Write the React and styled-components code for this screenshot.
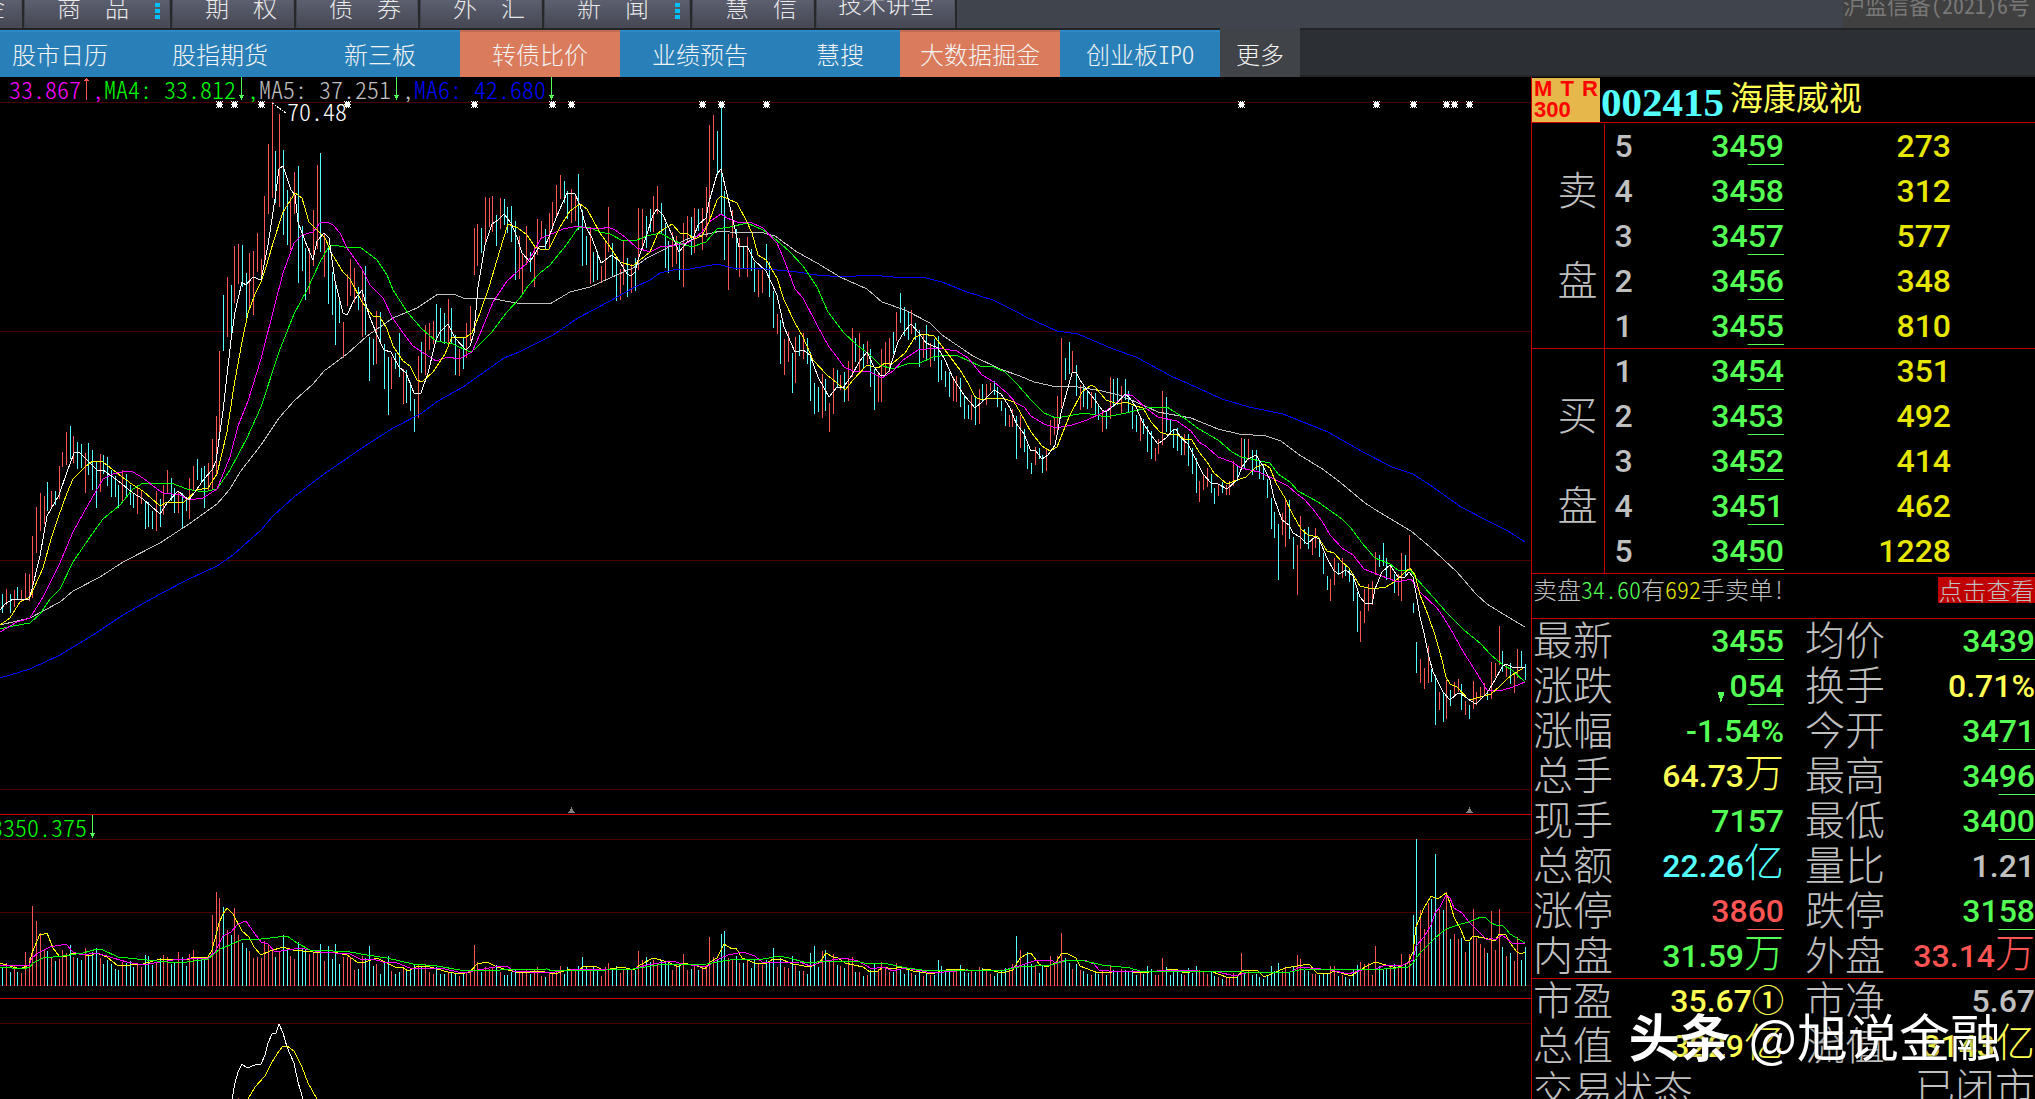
import React from "react";
import styled, { createGlobalStyle, css } from "styled-components";

// x, high, low, volume for each day, a negative volume marks a falling day
const days = [
  2,517,536,-19, 6,512,528,23, 10,517,536,-14, 14,513,530,21, 17,510,523,-14, 21,513,525,13, 25,496,523,34, 29,497,524,28,
  32,459,521,80, 36,430,476,65, 40,416,454,53, 44,419,447,36, 47,405,434,-35, 51,414,431,29, 55,414,428,-25, 59,389,422,27,
  62,375,390,36, 66,355,388,33, 70,349,382,-41, 73,359,386,29, 77,365,392,-28, 81,367,391,-26, 85,376,416,38, 88,366,398,-31,
  92,373,413,-34, 96,385,431,-38, 100,377,415,28, 103,378,397,-22, 107,380,409,-26, 111,393,420,-22, 115,399,420,-17, 118,408,431,-16,
  122,393,425,24, 126,397,419,-23, 130,408,428,-25, 133,417,431,-19, 137,408,437,21, 141,413,427,19, 145,424,452,-31, 148,425,450,-30,
  152,434,452,-21, 156,414,454,24, 160,422,450,-28, 163,408,438,31, 167,393,416,29, 171,401,424,-22, 174,411,436,-24, 178,415,436,34,
  182,416,451,-29, 186,420,434,-20, 189,401,442,32, 193,389,413,36, 197,382,403,-29, 201,391,406,-26, 204,389,431,-28, 208,386,414,27,
  212,362,412,71, 216,339,397,94, 219,274,357,88, 223,218,274,-79, 227,200,260,56, 231,208,260,-51, 234,169,226,78, 238,167,207,51,
  242,168,210,-43, 246,196,243,-38, 249,176,230,35, 253,174,238,28, 257,156,195,29, 261,182,204,28, 264,119,187,45, 268,67,137,42,
  272,25,121,37, 275,74,126,-29, 279,37,130,35, 283,73,158,-51, 287,113,168,-38, 290,120,173,30, 294,95,137,27, 298,89,206,-44,
  302,149,194,-38, 305,171,223,-36, 309,171,217,32, 313,133,189,34, 317,88,172,34, 320,76,175,-42, 324,156,200,25, 328,169,227,-40,
  332,195,238,-27, 335,207,268,-42, 339,220,246,-22, 343,245,281,29, 347,197,229,29, 350,182,219,28, 354,191,226,16, 358,210,233,-17,
  362,194,260,30, 365,189,258,-28, 369,260,304,-40, 373,262,288,-20, 376,234,287,22, 380,235,267,-12, 384,267,312,-25, 388,280,338,-30,
  391,280,312,15, 395,276,292,-12, 399,256,300,-14, 403,292,327,19, 406,293,326,-16, 410,305,334,-16, 414,322,355,-21, 418,279,341,21,
  421,265,296,-19, 425,248,298,22, 429,246,273,14, 433,244,267,12, 436,227,265,-19, 440,231,264,-12, 444,236,267,-12, 448,222,269,14,
  451,231,267,-13, 455,258,298,-12, 459,272,299,10, 463,261,292,-14, 466,246,281,13, 470,229,264,16, 474,151,198,41, 477,147,189,24,
  481,151,176,-14, 485,120,167,19, 489,121,150,17, 492,119,155,19, 496,138,169,-21, 500,121,152,14, 504,122,148,-11, 507,130,156,-11,
  511,129,165,-14, 515,144,203,-17, 519,159,202,14, 522,176,216,13, 526,149,188,16, 530,175,195,-12, 534,170,210,16, 537,142,178,19,
  541,144,162,10, 545,152,172,-9, 549,136,170,14, 552,125,153,14, 556,108,141,16, 560,98,122,20, 564,104,126,-12, 567,114,142,-19,
  571,112,146,16, 575,117,144,15, 578,97,153,-20, 582,133,189,-29, 586,159,188,-19, 590,150,207,16, 593,175,205,-19, 597,174,203,-16,
  601,189,206,10, 605,163,202,19, 608,130,175,23, 612,166,200,-18, 616,180,224,-20, 620,192,223,13, 623,163,208,17, 627,181,220,-17,
  631,187,216,17, 635,181,214,-16, 638,131,193,35, 642,132,170,26, 646,139,171,-29, 650,132,155,-24, 653,119,155,26, 657,109,137,22,
  661,126,157,-25, 665,146,191,-23, 668,164,196,-24, 672,155,190,16, 676,159,187,21, 679,166,203,-21, 683,146,210,32, 687,139,166,16,
  691,140,178,-17, 694,131,176,21, 698,132,154,-16, 702,131,173,19, 706,110,160,21, 709,48,143,49, 713,38,83,29, 717,54,98,-26,
  721,30,137,-52, 724,114,183,-55, 728,157,213,28, 732,133,161,26, 736,152,193,-30, 739,161,200,23, 743,170,191,-23, 747,160,200,25,
  751,172,194,-18, 754,185,215,-26, 758,193,220,22, 762,193,216,21, 766,167,193,-26, 769,185,220,-24, 773,214,251,-38, 777,237,257,19,
  780,243,287,-28, 784,262,298,19, 788,255,285,18, 792,276,316,-30, 795,260,306,20, 799,258,279,-15, 803,256,282,15, 807,261,287,-12,
  810,275,324,-33, 814,306,337,-40, 818,310,335,-19, 822,297,341,35, 825,302,334,-36, 829,326,355,24, 833,291,337,32, 837,293,311,-21,
  840,298,313,20, 844,295,325,-18, 848,284,324,28, 852,251,300,29, 855,261,285,-14, 859,256,295,14, 863,267,292,-10, 867,264,287,11,
  870,272,310,-16, 874,292,333,-23, 878,296,325,17, 881,272,325,24, 885,265,298,18, 889,261,295,14, 893,255,277,-14, 896,235,264,23,
  900,216,246,-17, 904,230,259,-12, 908,234,263,-17, 911,233,257,13, 915,246,263,-11, 919,253,290,-14, 923,258,281,10, 926,248,282,-12,
  930,266,290,11, 934,262,284,-11, 938,259,305,-26, 941,283,303,-20, 945,294,310,-14, 949,295,320,-16, 953,300,324,15, 956,299,325,15,
  960,301,330,-21, 964,319,342,-14, 968,328,342,-13, 971,318,343,16, 975,319,348,-14, 979,312,347,19, 982,307,325,-18, 986,307,328,15,
  990,306,314,12, 994,304,318,-10, 997,310,330,-13, 1001,324,334,-15, 1005,331,349,-18, 1009,338,350,17, 1012,332,350,22, 1016,339,382,-50,
  1020,338,371,36, 1024,352,375,-22, 1027,368,392,-34, 1031,386,397,-22, 1035,370,388,20, 1039,371,382,-13, 1042,378,396,-21, 1046,372,394,18,
  1050,343,368,30, 1054,341,358,24, 1057,319,353,30, 1061,261,331,53, 1065,281,303,-28, 1069,265,297,-23, 1072,274,296,17, 1076,288,319,-22,
  1080,308,333,16, 1083,308,330,-15, 1087,313,332,-12, 1091,315,331,11, 1095,316,338,-15, 1098,328,343,-12, 1102,333,355,15, 1106,335,352,-11,
  1110,300,342,21, 1113,302,330,-16, 1117,301,328,-15, 1121,309,337,17, 1125,302,323,-16, 1128,314,336,-14, 1132,329,352,-16, 1136,338,355,-11,
  1140,340,364,14, 1143,342,357,-12, 1147,349,375,-20, 1151,354,382,-17, 1155,371,384,11, 1158,362,377,11, 1162,314,368,28, 1166,320,355,-19,
  1170,343,358,-11, 1173,352,371,-15, 1177,351,374,-15, 1181,359,378,-12, 1184,357,378,11, 1188,357,389,-18, 1192,371,397,-13, 1196,381,416,-20,
  1199,404,425,16, 1203,397,413,15, 1207,391,410,12, 1211,397,416,-15, 1214,411,427,-10, 1218,407,419,9, 1222,405,416,-7, 1226,408,418,8,
  1229,404,418,8, 1233,384,409,13, 1237,388,404,-9, 1241,361,393,33, 1244,362,392,-13, 1248,362,383,15, 1252,373,398,-11, 1256,373,393,-12,
  1259,384,402,-9, 1263,388,403,-7, 1267,402,421,-11, 1271,421,452,-20, 1274,435,461,-15, 1278,447,503,-23, 1282,436,458,15, 1285,421,470,19,
  1289,423,462,-13, 1293,460,492,-19, 1297,468,518,31, 1300,439,472,27, 1304,452,467,-16, 1308,450,472,-15, 1312,463,478,12, 1315,451,471,12,
  1319,461,480,-11, 1323,476,497,-13, 1327,499,513,-13, 1330,502,524,20, 1334,481,508,20, 1338,486,498,-10, 1342,481,501,11, 1345,488,499,-9,
  1349,491,505,-7, 1353,497,524,-17, 1357,515,555,-21, 1360,534,565,24, 1364,512,546,22, 1368,507,534,23, 1372,504,528,11, 1375,475,498,40,
  1379,478,490,-20, 1383,466,489,-17, 1386,481,503,-18, 1390,487,502,19, 1394,497,516,-22, 1398,497,519,21, 1401,476,524,32, 1405,478,500,-22,
  1409,458,493,32, 1413,526,536,-71, 1416,565,596,-147, 1420,582,606,76, 1424,591,612,57, 1428,569,606,83, 1431,592,605,-87, 1435,598,648,-132,
  1439,615,633,77, 1443,616,645,-76, 1446,603,642,94, 1450,613,629,-47, 1454,605,618,52, 1458,602,615,47, 1461,607,633,-48, 1465,624,638,34,
  1469,628,642,-44, 1473,604,632,77, 1476,615,628,48, 1480,610,623,42, 1484,606,618,38, 1487,613,623,-33, 1491,585,622,75, 1495,586,600,36,
  1499,549,588,77, 1502,574,595,-39, 1506,588,600,30, 1510,586,607,-33, 1514,595,616,25, 1517,572,601,49, 1521,574,590,-26, 1525,587,603,-39,
];

const priceLines = [
  {
    color: "#0000ff",
    points:
      "0,601 30,592 60,578 93,558 123,538 160,517 189,502 217,489 233,478 261,453 273,439 294,420 324,397 362,371 393,351 422,336 438,324 463,310 480,298 504,281 519,275 533,268 553,258 578,241 610,224 633,211 650,203 660,196 673,193 690,192 717,187 733,191 767,192 797,195 817,198 843,200 870,198 893,200 922,200 942,205 967,215 993,223 1019,236 1026,240 1057,254 1078,257 1113,272 1136,280 1171,299 1198,311 1222,322 1249,330 1283,337 1328,355 1363,375 1392,390 1413,397 1430,408 1461,430 1488,444 1508,454 1525,465",
  },
  {
    color: "#c0c0c0",
    points:
      "0,548 30,541 60,525 73,514 100,500 123,485 160,466 189,447 217,427 230,412 240,395 261,368 279,341 294,324 313,307 324,294 347,277 367,259 393,241 417,231 438,217 453,217 466,222 490,221 505,224 517,226 550,227 570,215 590,210 610,201 633,191 647,181 667,171 692,160 703,158 721,154 730,155 760,155 775,159 797,175 817,186 840,200 867,212 882,225 905,233 930,246 942,258 973,279 1000,292 1020,299 1034,305 1057,310 1072,309 1102,314 1119,318 1136,325 1158,335 1191,341 1218,352 1239,357 1266,359 1281,364 1298,377 1324,393 1341,406 1365,426 1379,435 1411,454 1430,470 1457,495 1476,517 1487,527 1508,540 1525,550",
  },
  {
    color: "#00ff00",
    points:
      "0,552 13,549 30,546 40,537 50,522 60,512 73,485 90,460 103,442 120,428 133,412 143,406 171,406 187,412 203,415 217,412 230,393 247,361 261,330 279,275 294,237 307,213 320,185 328,171 333,168 350,171 360,170 377,183 387,198 393,213 408,236 422,252 436,264 453,267 470,275 475,272 492,255 507,235 520,221 528,209 540,196 550,188 567,167 578,151 588,150 600,155 610,157 623,164 637,163 647,159 660,156 673,163 682,167 692,170 706,165 717,152 730,150 747,146 763,153 773,160 790,175 803,189 817,210 828,235 843,255 857,268 870,278 880,288 893,292 907,287 920,286 933,280 947,278 958,279 980,289 994,290 1005,295 1017,307 1031,323 1044,336 1056,341 1085,336 1106,340 1126,336 1147,331 1167,330 1184,341 1199,352 1218,363 1232,375 1241,380 1270,386 1278,397 1290,405 1298,414 1318,425 1342,442 1351,451 1362,466 1375,481 1390,487 1398,493 1411,494 1416,501 1433,520 1447,536 1464,553 1481,567 1491,578 1503,588 1512,593 1525,605",
  },
  {
    color: "#ff00ff",
    points:
      "0,555 17,545 30,541 43,520 59,488 73,455 88,428 103,402 113,397 126,394 133,395 143,401 157,412 163,416 180,418 189,423 203,421 217,412 230,380 238,349 248,324 261,282 273,235 283,196 294,166 302,158 313,155 320,146 327,145 333,148 340,156 347,171 362,192 370,208 383,221 392,240 403,256 413,269 422,275 436,284 448,280 459,282 472,275 480,257 493,225 507,204 517,195 527,186 533,176 541,161 549,158 563,152 578,149 586,151 601,152 608,150 615,153 625,160 637,171 650,175 660,170 677,168 687,166 694,162 702,155 709,145 721,137 727,141 737,145 750,145 763,151 777,166 785,185 795,212 803,221 817,248 829,270 837,280 844,290 853,294 870,295 882,301 893,294 903,283 918,273 937,271 957,274 968,281 982,298 994,305 1007,316 1016,326 1024,330 1031,339 1044,347 1056,351 1072,348 1087,343 1102,336 1113,329 1126,317 1133,319 1147,332 1158,340 1177,344 1191,354 1199,365 1207,370 1218,380 1232,385 1241,391 1259,395 1280,405 1288,409 1297,417 1304,422 1312,431 1322,444 1330,458 1342,471 1353,478 1364,492 1379,498 1398,505 1411,502 1420,515 1437,531 1444,541 1454,558 1464,576 1473,590 1481,603 1487,613 1503,613 1513,610 1525,605",
  },
  {
    color: "#ffff00",
    points:
      "0,548 10,541 20,525 30,520 43,491 51,462 58,441 67,416 73,402 85,390 93,384 103,385 117,396 133,408 143,414 160,429 167,425 183,426 197,413 208,411 217,397 227,355 234,309 242,265 248,236 255,217 261,205 267,187 273,166 283,135 295,116 302,121 309,145 317,153 325,161 332,177 343,195 350,202 362,225 373,239 380,240 387,252 393,269 403,284 410,289 417,303 422,305 433,295 445,277 452,260 466,260 472,256 480,236 489,210 500,173 508,147 518,151 527,158 535,170 542,173 549,172 560,150 570,134 580,127 587,132 600,156 610,170 620,185 633,189 640,183 650,175 658,156 672,147 680,156 687,156 694,162 702,159 709,145 717,123 721,119 728,122 737,126 747,145 752,156 758,178 766,183 777,201 784,223 795,246 803,260 813,283 827,298 837,306 845,313 853,303 867,288 878,291 885,286 893,286 905,276 915,260 923,257 934,259 945,273 960,293 968,306 975,320 982,323 990,321 1005,322 1014,325 1020,335 1031,355 1042,369 1050,374 1057,370 1069,340 1082,315 1091,308 1095,310 1106,323 1118,327 1126,325 1136,329 1143,331 1151,345 1160,355 1166,357 1176,357 1184,362 1192,363 1199,375 1207,385 1214,396 1227,407 1237,403 1246,400 1256,390 1264,387 1270,391 1276,406 1285,421 1293,438 1301,452 1308,458 1318,460 1327,474 1334,476 1342,485 1349,491 1355,501 1360,509 1372,512 1386,510 1394,505 1403,497 1410,491 1415,498 1420,518 1428,538 1435,558 1442,583 1446,600 1450,607 1457,610 1469,623 1484,619 1491,617 1499,610 1507,602 1515,596 1525,590",
  },
  {
    color: "#ffffff",
    points:
      "0,533 5,527 13,522 29,522 32,512 40,479 47,439 59,418 67,395 74,376 79,375 88,384 97,393 103,393 117,403 133,416 143,422 160,437 167,426 178,414 189,423 197,412 204,402 212,393 216,384 223,334 231,263 235,235 242,205 246,208 253,200 261,203 268,168 275,122 279,92 283,89 291,113 295,118 298,145 305,164 313,183 317,164 324,156 329,161 335,204 343,236 347,238 354,223 362,213 369,238 377,258 384,273 391,275 399,290 406,296 414,316 421,316 428,296 436,263 440,255 448,247 455,261 466,273 470,269 474,256 478,210 485,168 492,147 498,143 504,137 511,146 517,160 522,176 530,185 539,170 545,169 549,160 556,141 563,125 567,116 575,117 580,128 586,150 592,161 601,186 612,178 620,185 627,197 631,199 635,195 638,183 646,160 653,138 657,132 663,138 672,158 679,175 687,165 693,162 698,148 706,141 709,125 717,97 721,92 728,121 739,170 747,169 754,183 766,194 777,218 784,250 795,275 803,273 810,278 818,300 829,320 837,310 843,311 852,298 859,285 867,275 874,290 880,298 885,298 889,294 893,281 898,265 904,255 911,247 919,256 926,266 938,271 945,283 953,301 964,318 975,331 982,325 994,313 1001,317 1010,331 1016,346 1024,357 1031,374 1035,373 1042,382 1048,378 1055,368 1058,353 1061,336 1066,318 1072,296 1076,295 1080,303 1087,313 1095,323 1102,333 1106,335 1117,326 1125,317 1129,320 1136,330 1143,346 1151,358 1158,367 1166,361 1173,353 1176,352 1181,361 1188,367 1196,383 1203,397 1211,406 1218,407 1227,412 1237,403 1242,390 1248,382 1256,378 1263,389 1270,403 1274,421 1282,443 1289,448 1293,456 1300,460 1307,467 1315,460 1319,462 1327,481 1334,494 1339,497 1346,493 1353,499 1360,520 1365,526 1372,527 1375,512 1382,495 1390,488 1398,500 1405,500 1409,495 1413,500 1416,516 1420,540 1424,556 1428,576 1433,595 1443,615 1450,623 1458,616 1461,617 1471,624 1476,627 1487,616 1495,603 1502,590 1506,587 1514,591 1525,590",
  },
];

const volumeLines = [
  {
    color: "#ffff00",
    points:
      "0,148 20,154 29,150 32,138 40,119 44,119 47,118 53,133 59,141 67,141 73,138 83,139 89,141 97,138 107,142 118,151 143,149 160,144 173,144 187,145 193,142 208,142 212,135 216,120 219,108 223,99 227,93 233,99 242,116 249,122 254,132 261,140 270,136 283,132 293,135 313,137 333,137 347,140 357,147 365,147 377,143 395,152 402,152 408,156 418,151 430,152 448,157 460,159 470,157 477,149 487,147 497,152 508,155 520,158 540,156 555,159 570,154 577,156 583,152 595,151 603,155 623,152 633,155 640,150 653,143 668,147 678,152 683,148 697,151 705,154 710,147 717,143 724,129 732,134 736,133 742,143 755,148 767,148 773,144 783,145 793,149 810,152 820,147 826,138 833,142 837,142 845,148 863,152 870,157 878,156 883,152 893,154 900,152 913,156 933,159 940,156 953,154 977,156 987,154 1002,158 1013,155 1020,143 1029,138 1031,138 1039,149 1046,152 1056,148 1061,139 1066,138 1076,143 1080,151 1098,158 1126,156 1140,158 1176,154 1184,158 1196,156 1210,156 1229,163 1237,162 1242,156 1257,155 1264,162 1285,153 1297,151 1309,149 1317,158 1328,159 1334,156 1351,161 1365,152 1375,147 1386,150 1396,153 1408,148 1413,137 1416,112 1424,93 1431,81 1438,84 1446,78 1450,88 1454,102 1461,115 1465,125 1469,126 1473,121 1484,123 1495,126 1499,119 1506,120 1510,128 1517,137 1521,139 1525,137",
  },
  {
    color: "#ff00ff",
    points:
      "0,151 29,150 32,143 38,138 50,132 66,129 73,137 82,140 97,138 113,143 127,147 143,150 160,147 180,144 187,144 208,143 215,137 223,121 231,117 238,109 246,106 255,119 261,127 268,129 275,137 300,133 320,137 350,139 360,144 373,144 383,147 397,148 410,153 440,153 463,158 473,156 500,151 507,151 513,156 530,157 555,157 560,156 580,154 633,154 647,150 672,146 683,149 707,152 713,147 721,143 728,140 743,137 755,141 763,148 800,147 810,151 825,146 845,143 858,146 872,154 883,152 893,156 905,153 933,158 967,155 1000,156 1019,151 1034,146 1051,145 1056,148 1065,145 1084,145 1094,149 1099,155 1119,157 1157,156 1177,155 1218,157 1235,161 1246,158 1290,157 1300,152 1331,155 1348,159 1362,155 1375,154 1386,150 1403,150 1413,145 1416,131 1424,122 1431,110 1435,98 1440,92 1446,80 1450,83 1454,93 1462,98 1469,107 1481,119 1487,125 1491,123 1495,125 1502,120 1512,128 1522,129 1525,128",
  },
  {
    color: "#00ff00",
    points:
      "0,152 23,154 30,152 33,148 43,143 63,141 83,138 97,134 103,135 118,142 147,145 167,147 187,147 208,144 220,134 230,130 243,124 261,124 287,121 297,128 310,135 333,136 350,137 367,140 387,143 413,149 437,151 460,155 500,155 547,154 552,156 607,155 633,154 657,150 707,149 723,146 737,144 763,144 780,141 793,144 807,148 828,146 860,147 868,149 883,148 907,153 930,156 967,155 1000,156 1019,152 1051,150 1068,145 1085,146 1102,150 1130,153 1140,156 1218,156 1270,158 1290,157 1304,154 1372,155 1408,152 1413,148 1420,138 1435,123 1446,114 1461,109 1469,107 1481,102 1486,103 1491,108 1496,110 1502,110 1506,114 1510,119 1525,128",
  },
];

const indicatorLines = [
  {
    color: "#ffffff",
    points:
      "232,100 235,84 238,73 242,65 246,68 250,68 257,65 261,65 265,56 268,44 272,35 276,34 279,25 283,34 287,48 294,64 298,83 303,100",
  },
  {
    color: "#ffff00",
    points:
      "248,100 255,88 265,77 272,63 279,52 283,47 287,47 294,52 302,68 308,84 317,100",
  },
];

const stars = [219, 234, 261, 347, 474, 552, 571, 702, 721, 766, 1241, 1376, 1413, 1446, 1454, 1469];
const markers = [571, 1469];

const categories = [
  { name: "基金", chars: ["基", "金"], clipped: true },
  { name: "商品", chars: ["商", "品"], dots: true },
  { name: "期权", chars: ["期", "权"] },
  { name: "债券", chars: ["债", "券"] },
  { name: "外汇", chars: ["外", "汇"] },
  { name: "新闻", chars: ["新", "闻"], dots: true },
  { name: "慧信", chars: ["慧", "信"] },
];

const shortcuts = [
  { name: "股市日历", first: true },
  { name: "股指期货" },
  { name: "新三板" },
  { name: "转债比价", hot: true },
  { name: "业绩预告" },
  { name: "慧搜", short: true },
  { name: "大数据掘金", hot: true },
  { name: "创业板IPO" },
];

const averages = [
  { text: "33.867", color: "#ff00ff", up: true },
  { text: "MA4: 33.812", color: "#00ff00" },
  { text: "MA5: 37.251", color: "#c0c0c0" },
  { text: "MA6: 42.680", color: "#0000ff", last: true },
];

const sells = [
  [5, "3459", 273],
  [4, "3458", 312],
  [3, "3457", 577],
  [2, "3456", 348],
  [1, "3455", 810],
];
const buys = [
  [1, "3454", 351],
  [2, "3453", 492],
  [3, "3452", 414],
  [4, "3451", 462],
  [5, "3450", 1228],
];

const GREEN = "#54ff54";
const RED = "#ff5454";
const YELLOW = "#ffff54";
const CYAN = "#54ffff";
const GRAY = "#c0c0c0";

const stats = [
  [
    { label: "最新", value: "3455", color: GREEN, price: true },
    { label: "均价", value: "3439", color: GREEN, price: true },
  ],
  [
    { label: "涨跌", value: "054", color: GREEN, price: true, drop: true },
    { label: "换手", value: "0.71%", color: YELLOW },
  ],
  [
    { label: "涨幅", value: "-1.54%", color: GREEN },
    { label: "今开", value: "3471", color: GREEN, price: true },
  ],
  [
    { label: "总手", value: "64.73", unit: "万", color: YELLOW },
    { label: "最高", value: "3496", color: GREEN, price: true },
  ],
  [
    { label: "现手", value: "7157", color: GREEN },
    { label: "最低", value: "3400", color: GREEN, price: true },
  ],
  [
    { label: "总额", value: "22.26", unit: "亿", color: CYAN },
    { label: "量比", value: "1.21", color: GRAY },
  ],
  [
    { label: "涨停", value: "3860", color: RED, price: true },
    { label: "跌停", value: "3158", color: GREEN, price: true },
  ],
  [
    { label: "内盘", value: "31.59", unit: "万", color: GREEN },
    { label: "外盘", value: "33.14", unit: "万", color: RED },
  ],
];

const valuation = [
  [
    { label: "市盈", value: "35.67", mark: "①", color: YELLOW },
    { label: "市净", value: "5.67", color: GRAY },
  ],
  [
    { label: "总值", value: "3229", unit: "亿", color: YELLOW },
    { label: "流值", value: "3143", unit: "亿", color: YELLOW },
  ],
  [{ label: "交易状态", unit: "已闭市", color: GRAY, wide: true }],
];

const eachDay = (draw) => {
  const rising = [];
  const falling = [];
  for (let i = 0; i < days.length; i += 4) {
    const [x, high, low, volume] = days.slice(i, i + 4);
    (volume > 0 ? rising : falling).push(draw(x, high, low, Math.abs(volume)));
  }
  return { rising: rising.join(""), falling: falling.join("") };
};

const candles = eachDay((x, high, low) => `M${x + 0.5} ${high}V${low}`);
const volumes = eachDay((x, high, low, volume) => `M${x + 0.5} 171V${171 - volume}`);

function Grid({ rows }) {
  return rows.map((y) => (
    <rect key={y} x="0" y={y} width="1531" height="1" fill="#480000" />
  ));
}

function Lines({ lines }) {
  return lines.map((line) => (
    <polyline
      key={line.color}
      points={line.points}
      fill="none"
      stroke={line.color}
    />
  ));
}

function Bars({ bars }) {
  return (
    <>
      <path d={bars.rising} stroke="#ff5454" />
      <path d={bars.falling} stroke="#54ffff" />
    </>
  );
}

function Trend({ up }) {
  return (
    <TrendIcon viewBox="0 0 11 23" $up={up} aria-hidden="true">
      {up ? (
        <path d="M5 1h1v22H5zM4 2h3v1H4zM3 3h5v1H3z" />
      ) : (
        <path d="M5 0h1v23H5zM3 18h5v1H3zM4 19h3v2H4z" />
      )}
    </TrendIcon>
  );
}

function Price({ value }) {
  return (
    <>
      {value.slice(0, -2)}
      <Cents>{value.slice(-2)}</Cents>
    </>
  );
}

function OrderBook({ side, rows }) {
  return (
    <Book>
      <tbody>
        {rows.map(([level, price, amount], i) => (
          <tr key={level}>
            {i === 0 && (
              <Side rowSpan={5} scope="rowgroup">
                <SideChar>{side}</SideChar>
                <SideChar>盘</SideChar>
              </Side>
            )}
            <Level>{level}</Level>
            <BookPrice>
              <Price value={price} />
            </BookPrice>
            <Amount>{amount}</Amount>
          </tr>
        ))}
      </tbody>
    </Book>
  );
}

function StatRows({ rows }) {
  return (
    <Stats>
      {rows.map((row) => (
        <StatRow key={row[0].label}>
          {row.map((stat) => (
            <Stat key={stat.label} $wide={stat.wide}>
              <StatLabel>{stat.label}</StatLabel>
              <StatValue $color={stat.color}>
                {stat.drop && (
                  <DropIcon viewBox="0 0 8 10" aria-hidden="true">
                    <path d="M1 0h6v4H6v2H5v3H4v1H3V6H2V3H1z" />
                  </DropIcon>
                )}
                {stat.price ? <Price value={stat.value} /> : stat.value}
                {stat.unit && <Unit>{stat.unit}</Unit>}
                {stat.mark}
              </StatValue>
            </Stat>
          ))}
        </StatRow>
      ))}
    </Stats>
  );
}

function App() {
  return (
    <Page>
      <GlobalStyle />
      <CategoryBar>
        {categories.map((item) => (
          <Category key={item.name} $clipped={item.clipped} $dots={item.dots}>
            <span>{item.chars[0]}</span>
            <span>{item.chars[1]}</span>
            {item.dots && (
              <Dots viewBox="0 0 5 16" aria-hidden="true">
                <path d="M0 0h5v4H0zM0 6h5v4H0zM0 12h5v4H0z" />
              </Dots>
            )}
          </Category>
        ))}
        <Lecture>技术讲堂</Lecture>
        <License>沪监信备(2021)6号</License>
      </CategoryBar>

      <ShortcutBar>
        {shortcuts.map((item) => (
          <Shortcut
            key={item.name}
            $hot={item.hot}
            $short={item.short}
            $first={item.first}
          >
            {item.name}
          </Shortcut>
        ))}
        <More>更多</More>
      </ShortcutBar>

      <Main>
        <Charts>
          <Panel>
            <Legend>
              {averages.map((item) => (
                <Average key={item.text} $color={item.color}>
                  {item.text}
                  <Trend up={item.up} />
                  {!item.last && ","}
                </Average>
              ))}
            </Legend>
            <Chart viewBox="0 24 1531 713" $height={713} preserveAspectRatio="none">
              <Grid rows={[25, 254, 483, 712]} />
              <Bars bars={candles} />
              <Lines lines={priceLines} />
              {stars.map((x) => (
                <path
                  key={x}
                  fill="#fff"
                  d={`M${x - 2} 25h5v5h-5zM${x - 3} 24h1v1h-1zM${x + 3} 24h1v1h-1zM${x - 3} 30h1v1h-1zM${x + 3} 30h1v1h-1zM${x - 1} 24h1v7h-1zM${x + 1} 24h1v7h-1zM${x - 3} 27h7v1h-7z`}
                />
              ))}
              <path d="M272 26L286 36" stroke="#fff" strokeDasharray="2 1" />
              <PeakLabel x="287" y="44">
                70.48
              </PeakLabel>
              {markers.map((x) => (
                <path
                  key={x}
                  fill="#808080"
                  d={`M${x} 730h1v2h1v2h1v1h1v1h-7v-1h1v-1h1v-2h1z`}
                />
              ))}
            </Chart>
          </Panel>

          <Panel>
            <Legend>
              <VolumeAverage $color="#00ff00">
                3350.375
                <Trend />
              </VolumeAverage>
            </Legend>
            <Chart viewBox="0 24 1531 159" $height={159} preserveAspectRatio="none">
              <Grid rows={[24, 97, 170]} />
              <Bars bars={volumes} />
              <Lines lines={volumeLines} />
            </Chart>
          </Panel>

          <Chart viewBox="0 0 1531 100" $height={100} preserveAspectRatio="none">
            <Grid rows={[24]} />
            <Lines lines={indicatorLines} />
            <rect x="238" y="99" width="1" height="1" fill="#ff5454" />
          </Chart>
        </Charts>

        <Quote>
          <Heading>
            <Badge>
              <BadgeLine>
                <span>M</span>
                <span>T</span>
                <span>R</span>
              </BadgeLine>
              <BadgeLine>300</BadgeLine>
            </Badge>
            <Code>002415</Code>
            <Name>海康威视</Name>
          </Heading>
          <OrderBook side="卖" rows={sells} />
          <OrderBook side="买" rows={buys} />
          <Notice>
            <p>
              卖盘<Tint $color={GREEN}>34.60</Tint>有
              <Tint $color="#e6e600">692</Tint>手卖单!
            </p>
            <ViewButton>点击查看</ViewButton>
          </Notice>
          <StatRows rows={stats} />
          <StatRows rows={valuation} />
          <Watermark>
            <strong>头条</strong>
            <span>@旭说金融</span>
          </Watermark>
        </Quote>
      </Main>
    </Page>
  );
}

export default App;

const cjk = `"Noto Sans CJK SC", sans-serif`;

const GlobalStyle = createGlobalStyle`
  * {
    box-sizing: border-box;
  }
  body {
    margin: 0;
    background: #000;
  }
  button {
    margin: 0;
    padding: 0;
    border: 0;
    font: inherit;
    color: inherit;
    cursor: pointer;
  }
`;

const Page = styled.div`
  display: flex;
  flex-direction: column;
  height: 100vh;
  overflow: hidden;
  background: #000;
  color: #c0c0c0;
  font-family: ${cjk};
  font-size: 24px;
  font-weight: 300;
  font-feature-settings: "hwid";
`;

const CategoryBar = styled.nav`
  display: flex;
  flex: none;
  height: 30px;
  gap: 3px;
  background: #40444c;
  border-bottom: 2px solid #222426;
`;

const tab = css`
  display: flex;
  flex: none;
  height: 28px;
  line-height: 14px;
  background: linear-gradient(#5b5f6f, #454852);
  box-shadow: 2px 0 0 #26282a, inset -1px 0 0 #4c4f58;
  color: #e8e8e8;
`;
const Category = styled.button`
  ${tab}
  justify-content: flex-end;
  gap: 24px;
  width: ${(props) => (props.$clipped ? 22 : props.$dots ? 145 : 121)}px;
  padding-right: ${(props) => (props.$dots ? 10 : 17)}px;
`;
const Dots = styled.svg`
  width: 5px;
  height: 16px;
  margin: 3px 0 0 2px;
  fill: #00c0ff;
`;
const Lecture = styled.button`
  ${tab}
  padding: 0 21px;
  line-height: 6px;
`;
const License = styled.div`
  margin-left: auto;
  width: 192px;
  height: 28px;
  line-height: 8px;
  overflow: hidden;
  white-space: nowrap;
  background: #404040;
  color: #787878;
  font-size: 22px;
  font-weight: 400;
`;

const ShortcutBar = styled.nav`
  display: flex;
  flex: none;
  height: 47px;
  background: #2c3035;
  box-shadow: inset 0 -2px 0 #222426;
`;
const Shortcut = styled.button`
  flex: none;
  width: ${(props) => (props.$short ? 120 : 160)}px;
  margin-left: ${(props) => (props.$first ? -20 : 0)}px;
  padding-bottom: 2px;
  line-height: 43px;
  background: ${(props) => (props.$hot ? "#da7b5c" : "#2980b9")};
  border-top: 2px solid ${(props) => (props.$hot ? "#c06c50" : "#2c88c6")};
  color: #f4f4f4;
`;
const More = styled.button`
  flex: none;
  width: 80px;
  height: 49px;
  margin-top: -2px;
  padding-top: 1px;
  background: #404449;
  color: #f4f4f4;
`;

const Main = styled.main`
  display: grid;
  flex: 1;
  grid-template-columns: minmax(0, 1fr) 504px;
  min-height: 0;
`;

const Charts = styled.section`
  display: flex;
  flex-direction: column;
  min-height: 0;
  overflow: hidden;
`;
const Panel = styled.div`
  flex: none;
  border-bottom: 1px solid #c80000;
`;
const Legend = styled.div`
  display: flex;
  height: 24px;
  padding-left: 9px;
  line-height: 24px;
  white-space: pre;
`;
const Average = styled.span`
  display: flex;
  color: ${(props) => props.$color};
`;
const VolumeAverage = styled(Average)`
  margin-left: -18px;
`;
const TrendIcon = styled.svg`
  flex: none;
  width: 11px;
  height: 23px;
  fill: ${(props) => (props.$up ? "#ff5454" : "#54ff54")};
`;
const Chart = styled.svg`
  display: block;
  flex: none;
  width: 100%;
  height: ${(props) => props.$height}px;
  shape-rendering: crispEdges;
`;
const PeakLabel = styled.text`
  fill: #fff;
  font-size: 24px;
`;

const Quote = styled.aside`
  position: relative;
  border-left: 1px solid #c80000;
  overflow: hidden;
`;
const Heading = styled.header`
  display: flex;
  height: 46px;
  margin-bottom: 1px;
  padding-top: 1px;
  border-bottom: 1px solid #c80000;
`;
const Badge = styled.div`
  width: 68px;
  padding: 0 2px;
  background: #e6b84c;
  color: #ff0000;
  font-family: "Liberation Sans", sans-serif;
  font-size: 22px;
  font-weight: 700;
  line-height: 21px;
`;
const BadgeLine = styled.div`
  display: flex;
  justify-content: space-between;
`;
const Code = styled.strong`
  margin: 0 6px 0 1px;
  color: #54ffff;
  font-family: "Liberation Serif", serif;
  font-size: 41px;
  font-weight: 700;
  line-height: 48px;
`;
const Name = styled.h1`
  margin: 0;
  color: #ffff54;
  font-size: 33px;
  font-weight: 400;
  line-height: 36px;
`;

const Book = styled.table`
  width: 100%;
  border-collapse: collapse;
  table-layout: fixed;
  box-shadow: inset 0 -1px 0 #c80000;
`;
const Side = styled.th`
  width: 72px;
  padding: 19px 6px 25px 0;
  border-right: 1px solid #c80000;
  font-size: 40px;
  font-weight: 300;
  text-align: right;
  vertical-align: top;
`;
const SideChar = styled.div`
  line-height: 90px;
`;
const digits = css`
  font-family: Roboto, ${cjk};
  font-size: 32px;
  font-weight: 500;
  line-height: 42px;
`;
const Level = styled.td`
  ${digits}
  width: 76px;
  padding: 1px 0 2px 10px;
`;
const BookPrice = styled.td`
  ${digits}
  width: 104px;
  padding: 1px 0 2px;
  color: #54ff54;
  text-align: right;
`;
const Amount = styled.td`
  ${digits}
  padding: 1px 84px 2px 0;
  color: #e6e600;
  text-align: right;
`;
const Cents = styled.span`
  text-decoration: underline 1px;
  text-decoration-skip-ink: none;
  text-underline-offset: 7px;
`;

const Notice = styled.div`
  display: flex;
  align-items: flex-start;
  justify-content: space-between;
  height: 45px;
  padding-top: 3px;
  border-bottom: 1px solid #c80000;
  white-space: nowrap;
  > p {
    margin: 0 0 0 1px;
    line-height: 24px;
  }
`;
const Tint = styled.span`
  color: ${(props) => props.$color};
`;
const ViewButton = styled.button`
  flex: none;
  width: 97px;
  line-height: 26px;
  background: #c00000;
  color: #c0c0c0;
`;

const Stats = styled.dl`
  margin: 0;
  box-shadow: inset 0 -1px 0 #c80000;
`;
const StatRow = styled.div`
  display: grid;
  grid-template-columns: 252px minmax(0, 1fr);
  column-gap: 20px;
  height: 45px;
`;
const Stat = styled.div`
  display: flex;
  justify-content: space-between;
  grid-column: ${(props) => (props.$wide ? "1 / -1" : "auto")};
  white-space: nowrap;
`;
const StatLabel = styled.dt`
  padding-left: 1px;
  font-size: 40px;
  line-height: 38px;
`;
const StatValue = styled.dd`
  ${digits}
  margin: 0;
  padding-top: 1px;
  color: ${(props) => props.$color};
`;
const Unit = styled.span`
  font-family: ${cjk};
  font-size: 40px;
  font-weight: 300;
  line-height: 0;
`;
const DropIcon = styled.svg`
  width: 8px;
  height: 10px;
  margin: 0 4px -5px 0;
  fill: currentColor;
`;

const Watermark = styled.div`
  position: absolute;
  top: 922px;
  right: 34px;
  display: flex;
  gap: 18px;
  color: #fff;
  font-size: 51px;
  font-weight: 400;
  line-height: 72px;
  white-space: nowrap;
  text-shadow: 0 0 3px rgba(0, 0, 0, 0.8);
  font-feature-settings: normal;
  > strong {
    font-weight: 700;
  }
`;
